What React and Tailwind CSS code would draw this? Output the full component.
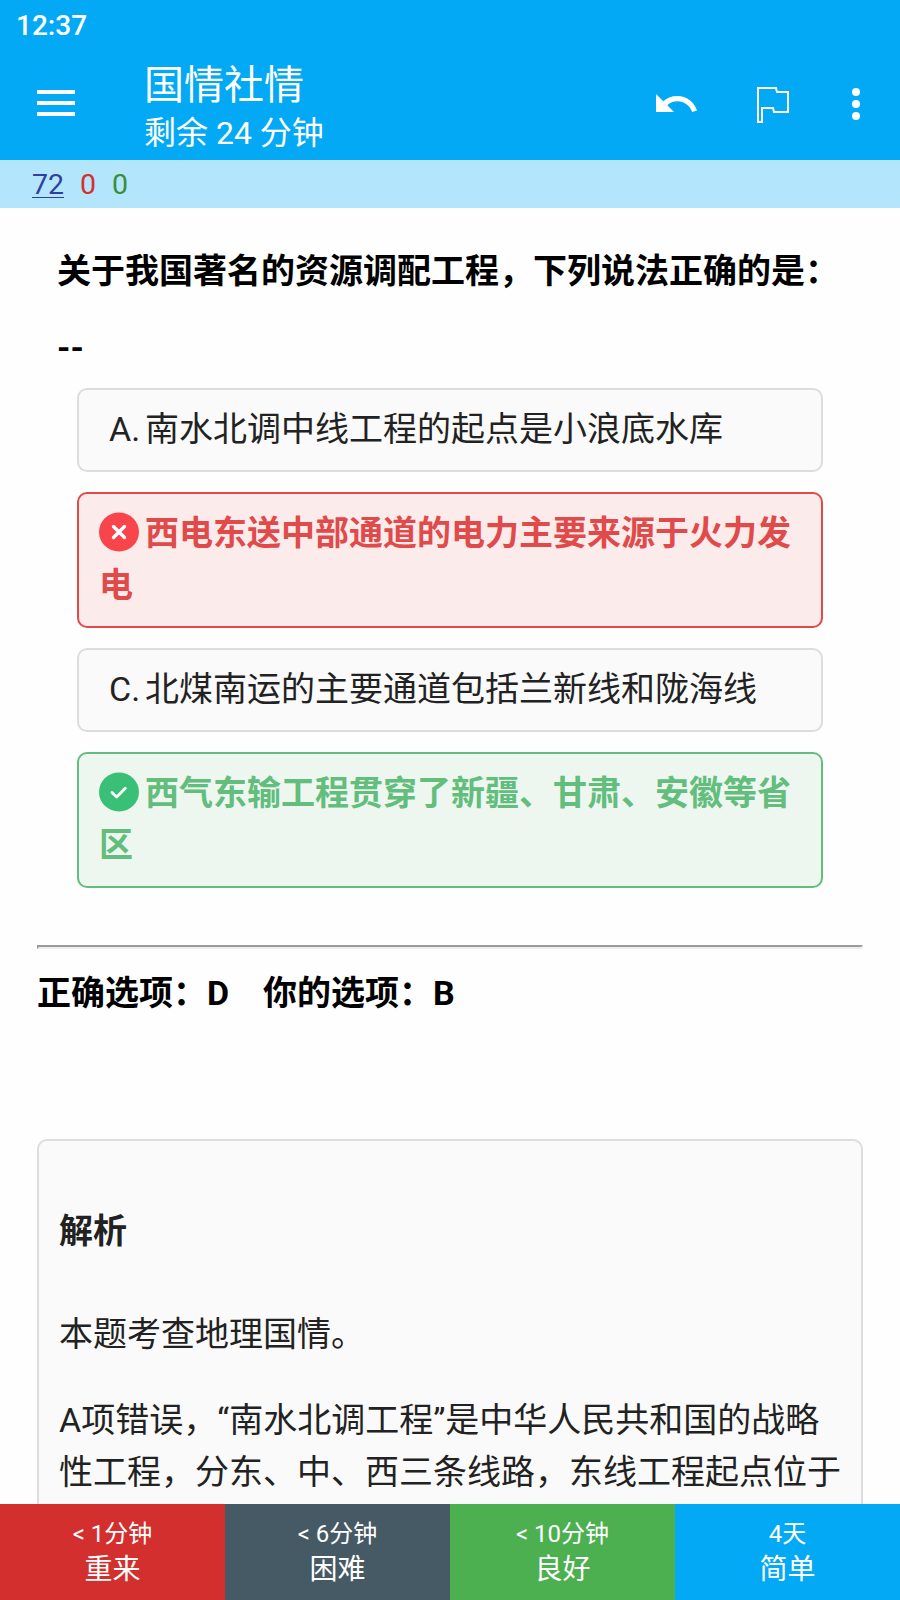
import React from "react";

const options = [
  { key: "A", text: "南水北调中线工程的起点是小浪底水库", state: "plain" },
  { key: "B", text: "西电东送中部通道的电力主要来源于火力发电", state: "wrong" },
  { key: "C", text: "北煤南运的主要通道包括兰新线和陇海线", state: "plain" },
  { key: "D", text: "西气东输工程贯穿了新疆、甘肃、安徽等省区", state: "right" },
];

const boxStyles = {
  plain: "border-[#dddddd] bg-[#fafafa] text-[#222222]",
  wrong: "border-[#e04a4a] bg-[#fbebeb] font-bold text-[#e04a4a]",
  right: "border-[#63bd7c] bg-[#edf7f0] font-bold text-[#63bd7c]",
};

const answers = [
  { time: "< 1分钟", label: "重来", color: "bg-[#d32f2f]" },
  { time: "< 6分钟", label: "困难", color: "bg-[#455a64]" },
  { time: "< 10分钟", label: "良好", color: "bg-[#4caf50]" },
  { time: "4天", label: "简单", color: "bg-[#03a9f4]" },
];

function Mark({ state }) {
  const wrong = state === "wrong";
  return (
    <svg viewBox="0 0 40 40" className="mr-[6px] mt-[-9px] inline-block h-10 w-10 align-middle" fill="none">
      <ellipse cx="20" cy="20" rx="20" ry="19.5" fill={wrong ? "#f8444b" : "#3ac076"} />
      <path
        d={wrong ? "M14.5 14.5L25.5 25.5M25.5 14.5L14.5 25.5" : "M13 20.5L17.7 25L26.3 16.3"}
        stroke="#fff"
        strokeWidth={wrong ? "3.4" : "2.8"}
        strokeLinecap="round"
        strokeLinejoin="round"
      />
    </svg>
  );
}

function Option({ item }) {
  return (
    <li className={`rounded-[10px] border-2 px-5 pt-[13px] pb-[15px] ${boxStyles[item.state]}`}>
      {item.state === "plain" ? (
        <span className="ml-[10px] inline-block w-[36px] whitespace-nowrap">{item.key}.</span>
      ) : (
        <Mark state={item.state} />
      )}
      {item.text}
    </li>
  );
}

export default function App() {
  return (
    <div
      lang="zh-CN"
      className="flex h-[1600px] w-[900px] flex-col overflow-hidden bg-[#fefefe] font-['Roboto','Noto_Sans_CJK_SC',sans-serif]"
    >
      <header className="flex h-40 shrink-0 flex-col bg-[#03a9f4] text-white">
        <div className="h-[50px] pl-4 text-[28px] leading-[52px] font-medium">12:37</div>
        <div className="flex h-[110px] items-center">
          <svg viewBox="0 0 38 26" className="mt-[-4px] ml-[37px] h-[26px] w-[38px]" fill="#fff">
            <path d="M0 0h38v4H0zM0 11h38v4H0zM0 22h38v4H0z" />
          </svg>
          <div className="mt-[6px] ml-[69px] flex flex-1 flex-col">
            <h1 className="text-[40px] leading-[50px]">国情社情</h1>
            <p className="text-[32px] leading-[44px]">剩余 24 分钟</p>
          </div>
          <svg viewBox="0 0 41 18" className="mt-[-4px] h-[18px] w-[41px]">
            <path d="M0 0V18H18L11.3 11.3C14 8.5 17.2 7.2 21.3 7.2C28 7.2 34 11.5 36.2 18L41 16.4C38 8 30.5 2.1 21.3 2.1C15.8 2.1 11.2 3.8 7.3 7.3Z" fill="#fff" />
          </svg>
          <svg viewBox="0 0 32 36" className="ml-[60px] h-9 w-8" fill="none" stroke="#fff" strokeWidth="2">
            <path d="M1 1H19L20 5H31V25H17L16 21H5V35H1Z" />
          </svg>
          <svg viewBox="0 0 8 32" className="mt-[-2px] mr-[40px] ml-[63px] h-8 w-2" fill="#fff">
            <circle cx="4" cy="4" r="4" />
            <circle cx="4" cy="16" r="4" />
            <circle cx="4" cy="28" r="4" />
          </svg>
        </div>
      </header>

      <div className="flex h-12 shrink-0 gap-4 bg-[#b3e5fc] pl-8 text-[28.5px] leading-[50px]">
        <span className="text-[#303f9f] underline decoration-1 underline-offset-[3px]">72</span>
        <span className="text-[#d32f2f]">0</span>
        <span className="text-[#388e3c]">0</span>
      </div>

      <main className="min-h-0 flex-1 overflow-hidden px-[37px] text-[34px] leading-[52px]">
        <div className="mt-[37px] ml-5 font-bold text-black">
          <p>关于我国著名的资源调配工程，下列说法正确的是：</p>
          <p className="mt-6">--</p>
        </div>
        <ul className="mx-10 mt-[15px] flex flex-col gap-5">
          {options.map((o) => (
            <Option key={o.key} item={o} />
          ))}
        </ul>
        <div className="mt-[57px] h-1 border-2 border-t-[#9a9a9a] border-r-[#eeeeee] border-b-[#eeeeee] border-l-[#9a9a9a]" />
        <p className="mt-[18px] font-bold text-black">正确选项：D　你的选项：B</p>
        <section className="mt-[120px] h-[500px] rounded-[10px] border-2 border-[#dddddd] bg-[#fafafa] px-5 text-[#222222]">
          <h2 className="mt-[64px] font-bold">解析</h2>
          <p className="mt-[51px]">本题考查地理国情。</p>
          <p className="mt-[34px]">
            A项错误，“南水北调工程”是中华人民共和国的战略
            <br />
            性工程，分东、中、西三条线路，东线工程起点位于
          </p>
        </section>
      </main>

      <footer className="grid h-24 shrink-0 grid-cols-4 text-center text-white">
        {answers.map((a) => (
          <button key={a.label} className={`flex flex-col items-center pt-[13px] ${a.color}`}>
            <span className="text-[24px] leading-[34px]">{a.time}</span>
            <span className="text-[28px] leading-[38px]">{a.label}</span>
          </button>
        ))}
      </footer>
    </div>
  );
}
